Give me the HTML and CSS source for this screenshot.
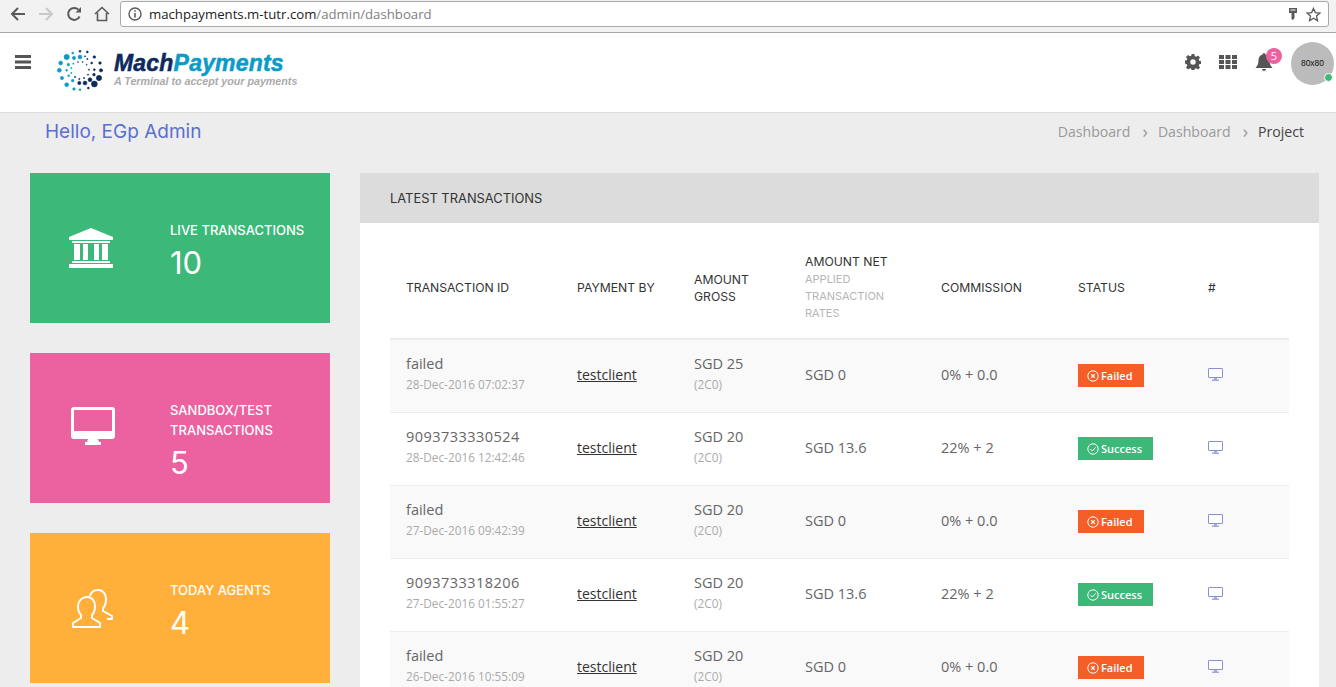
FILE: index.html
```html
<!DOCTYPE html>
<html lang="en">
<head>
<meta charset="UTF-8">
<meta name="viewport" content="width=device-width, initial-scale=1.0">
<title>MachPayments Dashboard</title>
<link rel="stylesheet" href="styles.css">
</head>
<body>

<svg class="defs" width="0" height="0">
    <symbol id="monitor" viewBox="0 0 44 38">
        <path fill-rule="evenodd" d="M3 0h38a3 3 0 0 1 3 3v26a3 3 0 0 1-3 3H27l1 3h2v3H14v-3h2l1-3H3a3 3 0 0 1-3-3V3a3 3 0 0 1 3-3zm0 3v21h38V3z"/>
    </symbol>
    <symbol id="screen" viewBox="0 0 15 13">
        <rect x="0.500" y="0.500" width="14" height="9" rx="0.500" fill="#fff" stroke="#8a90d8"/>
        <path d="M6 10h3v1.500h2V13H4v-1.500h2z" fill="#a9a6dc"/>
    </symbol>
    <symbol id="circleX" viewBox="0 0 12 12">
        <circle cx="6" cy="6" r="5.200" fill="none" stroke="#fff" stroke-width="1"/>
        <path d="M4.200 4.200l3.600 3.600M7.800 4.200l-3.600 3.600" stroke="#fff" stroke-width="1.200"/>
    </symbol>
    <symbol id="circleCheck" viewBox="0 0 12 12">
        <circle cx="6" cy="6" r="5.200" fill="none" stroke="#fff" stroke-width="1"/>
        <path d="M3.500 6.200l1.800 1.800 3.300-3.600" fill="none" stroke="#fff" stroke-width="1"/>
    </symbol>
</svg>

<div class="browser-bar">
    <svg class="nav-icon" width="16" height="16" viewBox="0 0 16 16"><path d="M15 8H2M8 2L2 8l6 6" fill="none" stroke="#5a5a5a" stroke-width="2"/></svg>
    <svg class="nav-icon" width="16" height="16" viewBox="0 0 16 16"><path d="M1 8h13M8 2l6 6-6 6" fill="none" stroke="#c8c8c8" stroke-width="2"/></svg>
    <svg class="nav-icon" width="16" height="16" viewBox="0 0 16 16"><path d="M13.600 10.500A6 6 0 1 1 12.400 3.600" fill="none" stroke="#5a5a5a" stroke-width="2"/><path d="M9.500 6.500H15V1z" fill="#5a5a5a"/></svg>
    <svg class="nav-icon" width="16" height="16" viewBox="0 0 16 16"><path d="M1 8l7-6.500L15 8M3.500 7v7.500h9V7" fill="none" stroke="#5a5a5a" stroke-width="1.600"/></svg>
    <div class="url-box">
        <svg width="14" height="14" viewBox="0 0 14 14"><circle cx="7" cy="7" r="6" fill="none" stroke="#5a5a5a" stroke-width="1.400"/><path d="M7 6v4.500M7 3.200v1.600" stroke="#5a5a5a" stroke-width="1.600"/></svg>
        <span class="url-text">machpayments.m-tutr.com<span class="url-path">/admin/dashboard</span></span>
        <svg class="url-key" width="10" height="14" viewBox="0 0 10 14"><path fill-rule="evenodd" d="M1 1h8v5H6.500v5L5 13l-1.500-1V6H1zM2.500 2.500v1h5v-1z" fill="#5a5a5a"/></svg>
        <svg width="15" height="15" viewBox="0 0 16 16"><path d="M8 1.500l2 4.500 4.800.5-3.600 3.200 1 4.800L8 12l-4.200 2.500 1-4.800L1.200 6.500 6 6z" fill="none" stroke="#5a5a5a" stroke-width="1.400"/></svg>
    </div>
</div>

<header class="topbar">
    <svg class="menu-icon" width="16" height="14" viewBox="0 0 16 14"><path d="M0 0h16v3H0zM0 5.500h16v3H0zM0 11h16v3H0z" fill="#555"/></svg>
    <div class="logo">
        <svg width="50" height="45" viewBox="165 145 150 135">
            <g fill="#0a9cc6" stroke="#0a9cc6" stroke-width="1.500">
                <circle cx="200" cy="172" r="8"/><circle cx="182" cy="190" r="6"/><circle cx="178" cy="212" r="6"/>
                <circle cx="186" cy="235" r="5"/><circle cx="200" cy="255" r="6"/><circle cx="222" cy="268" r="4"/>
                <circle cx="240" cy="270" r="3"/><circle cx="222" cy="175" r="5"/><circle cx="240" cy="172" r="6"/>
                <circle cx="205" cy="195" r="4"/><circle cx="200" cy="212" r="3"/><circle cx="206" cy="228" r="3"/>
                <circle cx="218" cy="243" r="4"/><circle cx="218" cy="160" r="3"/>
                <circle cx="220" cy="192" r="2"/><circle cx="214" cy="205" r="2"/><circle cx="214" cy="220" r="2"/>
            </g>
            <g fill="#0d2a5e" stroke="#0d2a5e" stroke-width="1.500">
                <circle cx="265" cy="265" r="3"/><circle cx="283" cy="253" r="9"/><circle cx="297" cy="235" r="8"/>
                <circle cx="303" cy="212" r="5"/><circle cx="300" cy="190" r="4"/><circle cx="283" cy="172" r="4"/>
                <circle cx="262" cy="157" r="3"/><circle cx="240" cy="155" r="3"/><circle cx="238" cy="250" r="5"/>
                <circle cx="255" cy="250" r="6"/><circle cx="270" cy="240" r="6"/><circle cx="282" cy="225" r="4"/>
                <circle cx="283" cy="210" r="3"/><circle cx="275" cy="190" r="3"/><circle cx="262" cy="178" r="2"/>
                <circle cx="255" cy="170" r="2"/><circle cx="225" cy="232" r="2"/><circle cx="238" cy="238" r="2"/>
                <circle cx="252" cy="235" r="2"/><circle cx="264" cy="225" r="2"/><circle cx="267" cy="210" r="2"/>
                <circle cx="260" cy="195" r="1.500"/><circle cx="248" cy="187" r="1.500"/><circle cx="234" cy="187" r="1.500"/>
            </g>
        </svg>
        <div class="logo-text">
            <div class="logo-name">Mach<span class="logo-accent">Payments</span></div>
            <div class="logo-tag">A Terminal to accept your payments</div>
        </div>
    </div>
    <div class="top-actions">
        <svg class="top-icon" width="16" height="16" viewBox="0 0 16 16">
            <path fill="#555" fill-rule="evenodd" d="M6.600 0h2.800l.4 2.200 1.300.6 1.900-1.300 2 2-1.300 1.900.6 1.300 2.200.4v2.800l-2.200.4-.6 1.300 1.300 1.900-2 2-1.900-1.300-1.300.6-.4 2.200H6.600l-.4-2.200-1.300-.6-1.900 1.300-2-2 1.300-1.900-.6-1.300L-.5 9.400V6.600l2.200-.4.600-1.300L1 3l2-2 1.900 1.300 1.300-.6zM8 5.300a2.700 2.700 0 1 0 0 5.400 2.700 2.700 0 0 0 0-5.400z"/>
        </svg>
        <svg class="top-icon" width="18" height="14" viewBox="0 0 18 14">
            <path fill="#555" d="M0 0h5v4H0zM6.500 0h5v4h-5zM13 0h5v4h-5zM0 5h5v4H0zM6.500 5h5v4h-5zM13 5h5v4h-5zM0 10h5v4H0zM6.500 10h5v4h-5zM13 10h5v4h-5z"/>
        </svg>
        <div class="bell top-icon">
            <svg width="18" height="18" viewBox="0 0 18 18"><path fill="#555" d="M9 0a2 2 0 0 1 1.500 1.500C13 2.300 14.500 4.500 14.500 7c0 4 1 5.500 3 8H.5c2-2.500 3-4 3-8 0-2.500 1.500-4.700 4-5.500A2 2 0 0 1 9 0zM7 16h4a2 2 0 0 1-4 0z"/></svg>
            <span class="bell-badge">5</span>
        </div>
        <div class="avatar">80x80<span class="avatar-dot"></span></div>
    </div>
</header>

<div class="page-title">
    <h1 class="hello">Hello, EGp Admin</h1>
    <div class="crumbs">
        <span>Dashboard</span><i>›</i><span>Dashboard</span><i>›</i><span class="crumb-now">Project</span>
    </div>
</div>

<main class="content">
    <aside class="cards">
        <div class="card card-green">
            <div class="card-icon">
                <svg width="44" height="40" viewBox="0 0 44 40"><path fill="#fff" d="M22 0l22 9v3H0V9zM3 13h38v2H3zM5 16h6v16H5zM14 16h5v16h-5zM25 16h5v16h-5zM33 16h6v16h-6zM3 33h38v2H3zM0 36h44v4H0z"/></svg>
            </div>
            <div class="card-body">
                <div class="card-label">LIVE TRANSACTIONS</div>
                <div class="card-num">10</div>
            </div>
        </div>
        <div class="card card-pink">
            <div class="card-icon icon-shift icon-up">
                <svg width="44" height="38" fill="#fff"><use href="#monitor"/></svg>
            </div>
            <div class="card-body">
                <div class="card-label">SANDBOX/TEST TRANSACTIONS</div>
                <div class="card-num">5</div>
            </div>
        </div>
        <div class="card card-orange">
            <div class="card-icon icon-shift">
                <svg width="42" height="42" viewBox="0 0 42 42"><path d="M18 9c1-4 4-6 8-6 5 0 8 4 8 9 0 4-1 7-3 9v3l9 5v3h-5M15 10c5 0 8 4 8 9 0 4-1 7-3 9v3l8 5v4H1v-4l8-5v-3c-2-2-3-5-3-9 0-5 4-9 9-9z" fill="none" stroke="#fff" stroke-width="2" stroke-linejoin="round"/></svg>
            </div>
            <div class="card-body">
                <div class="card-label">TODAY AGENTS</div>
                <div class="card-num">4</div>
            </div>
        </div>
    </aside>

    <section class="panel">
        <div class="panel-head">LATEST TRANSACTIONS</div>
        <div class="panel-body">
            <table class="tx-table">
                <colgroup>
                    <col class="c-id"><col class="c-by"><col class="c-gross"><col class="c-net"><col class="c-comm"><col class="c-status"><col class="c-view">
                </colgroup>
                <thead>
                    <tr>
                        <th>TRANSACTION ID</th>
                        <th>PAYMENT BY</th>
                        <th>AMOUNT GROSS</th>
                        <th>AMOUNT NET <small>APPLIED TRANSACTION RATES</small></th>
                        <th>COMMISSION</th>
                        <th>STATUS</th>
                        <th>#</th>
                    </tr>
                </thead>
                <tbody>
                    <tr>
                        <td>failed<small>28-Dec-2016 07:02:37</small></td>
                        <td><a href="#">testclient</a></td>
                        <td>SGD 25<small>(2C0)</small></td>
                        <td>SGD 0</td>
                        <td>0% + 0.0</td>
                        <td><span class="badge badge-failed"><svg width="12" height="12"><use href="#circleX"/></svg>Failed</span></td>
                        <td><svg class="view-icon" width="15" height="13"><use href="#screen"/></svg></td>
                    </tr>
                    <tr>
                        <td><span class="tx-id">9093733330524</span><small>28-Dec-2016 12:42:46</small></td>
                        <td><a href="#">testclient</a></td>
                        <td>SGD 20<small>(2C0)</small></td>
                        <td>SGD 13.6</td>
                        <td>22% + 2</td>
                        <td><span class="badge badge-success"><svg width="12" height="12"><use href="#circleCheck"/></svg>Success</span></td>
                        <td><svg class="view-icon" width="15" height="13"><use href="#screen"/></svg></td>
                    </tr>
                    <tr>
                        <td>failed<small>27-Dec-2016 09:42:39</small></td>
                        <td><a href="#">testclient</a></td>
                        <td>SGD 20<small>(2C0)</small></td>
                        <td>SGD 0</td>
                        <td>0% + 0.0</td>
                        <td><span class="badge badge-failed"><svg width="12" height="12"><use href="#circleX"/></svg>Failed</span></td>
                        <td><svg class="view-icon" width="15" height="13"><use href="#screen"/></svg></td>
                    </tr>
                    <tr>
                        <td><span class="tx-id">9093733318206</span><small>27-Dec-2016 01:55:27</small></td>
                        <td><a href="#">testclient</a></td>
                        <td>SGD 20<small>(2C0)</small></td>
                        <td>SGD 13.6</td>
                        <td>22% + 2</td>
                        <td><span class="badge badge-success"><svg width="12" height="12"><use href="#circleCheck"/></svg>Success</span></td>
                        <td><svg class="view-icon" width="15" height="13"><use href="#screen"/></svg></td>
                    </tr>
                    <tr>
                        <td>failed<small>26-Dec-2016 10:55:09</small></td>
                        <td><a href="#">testclient</a></td>
                        <td>SGD 20<small>(2C0)</small></td>
                        <td>SGD 0</td>
                        <td>0% + 0.0</td>
                        <td><span class="badge badge-failed"><svg width="12" height="12"><use href="#circleX"/></svg>Failed</span></td>
                        <td><svg class="view-icon" width="15" height="13"><use href="#screen"/></svg></td>
                    </tr>
                </tbody>
            </table>
        </div>
    </section>
</main>

</body>
</html>
```

FILE: styles.css
```css
html, body {
    height: 687px;
    overflow: hidden;
}
body {
    margin: 0;
    background: #ededed;
    font-family: "Open Sans", sans-serif;
    color: #666;
}
.defs {
    position: absolute;
}

/* browser chrome */
.browser-bar {
    height: 33px;
    box-sizing: border-box;
    display: flex;
    align-items: center;
    background: #f2f2f2;
    border-bottom: 1px solid #a8a8a8;
    padding: 1px 7px 5px 10px;
}
.nav-icon {
    margin-right: 12px;
}
.url-box {
    flex: 1;
    height: 26px;
    box-sizing: border-box;
    margin-left: -2px;
    background: #fff;
    border: 1px solid #a9a9a9;
    border-radius: 3px;
    display: flex;
    align-items: center;
    padding: 0 7px 0 7px;
}
.url-text {
    flex: 1;
    margin-left: 7px;
    font-size: 13.200px;
    color: #222;
}
.url-path {
    color: #808080;
}
.url-key {
    margin-right: 8px;
}

/* top bar */
.topbar {
    height: 80px;
    box-sizing: border-box;
    background: #fff;
    border-bottom: 1px solid #ddd;
    display: flex;
    align-items: flex-start;
    padding: 9px 2px 0 15px;
}
.menu-icon {
    margin-top: 13px;
}
.logo {
    display: flex;
    margin-left: 24px;
    margin-top: 6px;
}
.logo-text {
    margin-left: 9px;
    margin-top: 3px;
    font-family: "Liberation Sans", sans-serif;
    font-style: italic;
    font-weight: bold;
}
.logo-name {
    font-size: 23px;
    line-height: 24px;
    letter-spacing: 0.200px;
    color: #0d2a5e;
    -webkit-text-stroke: 0.500px;
}
.logo-accent {
    color: #0a9cc6;
}
.logo-tag {
    font-size: 10.700px;
    line-height: 12px;
    color: #aaa;
}
.top-actions {
    margin-left: auto;
    display: flex;
    align-items: center;
    gap: 18px;
}
.top-icon {
    margin-bottom: 4px;
}
.bell {
    position: relative;
    display: flex;
}
.bell-badge {
    position: absolute;
    top: -5px;
    left: 11px;
    width: 16px;
    height: 16px;
    border-radius: 50%;
    background: #ec619f;
    color: #fff;
    font-size: 11px;
    line-height: 16px;
    text-align: center;
}
.avatar {
    position: relative;
    width: 43px;
    height: 43px;
    border-radius: 50%;
    background: #bbb;
    color: #111;
    font-family: "Liberation Sans", sans-serif;
    font-size: 8.500px;
    line-height: 43px;
    text-align: center;
}
.avatar-dot {
    position: absolute;
    right: 1px;
    bottom: 3px;
    width: 7px;
    height: 7px;
    border-radius: 50%;
    background: #3cb878;
    border: 1px solid #fff;
}

/* title row */
.page-title {
    display: flex;
    justify-content: space-between;
    align-items: center;
    height: 38px;
    box-sizing: border-box;
    padding: 0 32px 2px 45px;
}
.hello {
    margin: 0;
    font-family: Inter, sans-serif;
    font-size: 19px;
    font-weight: 400;
    color: #5a6fd0;
}
.crumbs {
    display: flex;
    align-items: center;
    font-size: 14.100px;
    color: #999;
}
.crumbs i {
    font-style: normal;
    font-size: 18px;
    line-height: 18px;
    margin: 0 10px 0 12px;
}
.crumb-now {
    color: #444;
}

/* main */
.content {
    display: flex;
    gap: 30px;
    padding: 22px 17px 0 30px;
}
.cards {
    width: 300px;
    flex-shrink: 0;
}
.card {
    height: 150px;
    margin-bottom: 30px;
    display: flex;
    align-items: center;
    color: #fff;
}
.card-green { background: #3cb878; }
.card-pink { background: #ec619f; }
.card-orange { background: #ffaf3a; }
.card-icon {
    width: 122px;
    box-sizing: border-box;
    margin-right: 18px;
    display: flex;
    justify-content: center;
}
.icon-shift {
    padding-left: 3px;
}
.icon-up {
    margin-bottom: 4px;
}
.card-body {
    flex: 1;
    align-self: flex-start;
    padding: 47px 20px 0 0;
}
.card-label {
    font-family: Inter, sans-serif;
    font-size: 13px;
    line-height: 20px;
    font-weight: 500;
}
.card-num {
    font-family: Inter, sans-serif;
    font-size: 31px;
    line-height: 46px;
}

.panel {
    flex: 1;
    background: #fff;
}
.panel-head {
    height: 50px;
    background: #dcdcdc;
    padding-left: 30px;
    font-family: Inter, sans-serif;
    font-size: 12.900px;
    line-height: 52px;
    color: #333;
}
.panel-body {
    padding: 20px 30px 0;
}

/* table */
.tx-table {
    width: 899px;
    table-layout: fixed;
    border-collapse: collapse;
}
.c-id { width: 171px; }
.c-by { width: 117px; }
.c-gross { width: 111px; }
.c-net { width: 136px; }
.c-comm { width: 137px; }
.c-status { width: 130px; }
.c-view { width: 97px; }
.tx-table th {
    height: 96px;
    box-sizing: border-box;
    padding: 0 16px 6px;
    border-bottom: 2px solid #ededed;
    text-align: left;
    font-family: Inter, sans-serif;
    font-size: 12.200px;
    line-height: 17px;
    font-weight: 400;
    color: #333;
}
.tx-table th small {
    display: block;
    margin-top: 1px;
    font-size: 11px;
    color: #b5b5b5;
}
.tx-table td {
    height: 73px;
    box-sizing: border-box;
    padding: 0 16px 2px;
    border-bottom: 1px solid #ededed;
    font-size: 14.500px;
    color: #666;
}
.tx-table td small {
    display: block;
    font-size: 11.800px;
    line-height: 22px;
    color: #aaa;
}
.tx-id {
    letter-spacing: 0.450px;
}
.tx-table tbody tr:nth-child(odd) {
    background: #f9f9f9;
}
.tx-table a {
    font-size: 14px;
    color: #333;
}
.badge {
    display: inline-flex;
    align-items: center;
    height: 23px;
    margin-top: 2px;
    padding: 0 11px 0 9px;
    gap: 2px;
    color: #fff;
    font-size: 11px;
    font-weight: 600;
    vertical-align: middle;
}
.badge-failed { background: #f55e27; }
.badge-success { background: #3cb878; }
.view-icon {
    display: block;
}
```
